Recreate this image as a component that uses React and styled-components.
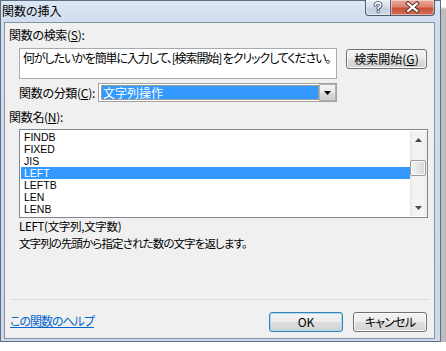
import React from "react";
import styled, { createGlobalStyle } from "styled-components";

const GlobalStyle = createGlobalStyle`
  html, body { margin: 0; padding: 0; background: #ffffff; }
  body {
    font-family: "Noto Sans CJK JP", "Noto Sans", sans-serif;
    font-size: 12px;
    color: #000;
    font-feature-settings: "palt";
  }
  * { box-sizing: border-box; }
`;

const Window = styled.div`
  width: 441px;
  height: 342px;
  border: 1px solid #5f6f83;
  background: linear-gradient(#dce7f4 0px, #d0ddee 22px, #cbd9ea 100%);
  box-shadow: 8px 8px 2px rgba(0, 0, 0, 0.26);
  display: flex;
  flex-direction: column;
`;

const TitleBar = styled.div`
  height: 21px;
  display: flex;
  align-items: flex-start;
  justify-content: space-between;
`;

const Title = styled.div`
  padding-left: 1px;
  line-height: 20px;
  font-size: 12px;
  color: #000;
`;

const CaptionButtons = styled.div`
  display: flex;
  margin-top: -1px;
  margin-right: 5px;
  height: 16px;
`;

const CaptionButton = styled.div`
  width: ${(p) => (p.$close ? 44 : 26)}px;
  height: 16px;
  display: flex;
  align-items: center;
  justify-content: center;
  border: 1px solid #4b5d73;
  border-top: none;
  ${(p) => (p.$close ? "border-left: none;" : "")}
  border-radius: ${(p) => (p.$close ? "0 0 4px 0" : "0 0 0 4px")};
  background: ${(p) =>
    p.$close
      ? "linear-gradient(#e9a99b 0%, #dd8372 45%, #c9503b 55%, #d36f54 100%)"
      : "linear-gradient(#e9eef5 0%, #d6dfea 45%, #c3cfdf 55%, #cdd8e6 100%)"};
  box-shadow: inset 0 0 0 1px rgba(255, 255, 255, 0.45);
`;

const Client = styled.div`
  flex: 1;
  margin: 0 5px 2px 3px;
  border: 1px solid #8593a4;
  background: #f0f0f0;
  padding: 5px 5px 6px 4px;
  display: flex;
  flex-direction: column;
`;

const Label = styled.div`
  height: 14px;
  line-height: 14px;
  white-space: nowrap;
  letter-spacing: -0.3px;
  margin-top: ${(p) => p.$top || 0}px;
  margin-left: ${(p) => p.$indent || 0}px;
`;

const SearchRow = styled.div`
  display: flex;
  align-items: flex-start;
  gap: 9px;
  margin-top: 6px;
  margin-left: 10px;
`;

const SearchBox = styled.div`
  width: 318px;
  height: 31px;
  border: 1px solid #a6abb2;
  background: #fff;
  padding: 2px 3px;
  line-height: 14px;
  letter-spacing: -1.1px;
  white-space: nowrap;
  overflow: hidden;
`;

const Button = styled.div`
  width: ${(p) => p.$w}px;
  height: 20px;
  margin-top: ${(p) => p.$top || 0}px;
  display: flex;
  align-items: center;
  justify-content: center;
  border: 1px solid ${(p) => (p.$default ? "#3c7fb1" : "#707070")};
  border-radius: 3px;
  background: linear-gradient(#f3f3f3 0%, #ececec 50%, #dedede 51%, #d2d2d2 100%);
  box-shadow: inset 0 0 0 1px ${(p) => (p.$default ? "#a8dcf6" : "#fbfbfb")};
  white-space: nowrap;
  line-height: 14px;
  letter-spacing: ${(p) => p.$ls || 0}px;
`;

const CategoryRow = styled.div`
  display: flex;
  align-items: center;
  margin-top: 4px;
  margin-left: 10px;
`;

const CategoryLabel = styled.div`
  width: 79px;
  line-height: 14px;
  letter-spacing: -0.3px;
  white-space: nowrap;
`;

const Combo = styled.div`
  width: 239px;
  height: 19px;
  border: 1px solid #a2a2a2;
  background: #fff;
  display: flex;
`;

const ComboValue = styled.div`
  flex: 1;
  margin: 1px 0 1px 2px;
  background: #3399ff;
  color: #fff;
  border: 1px dotted #f2a33a;
  padding-left: 1px;
  line-height: 13px;
  white-space: nowrap;
`;

const ComboArrow = styled.div`
  width: 17px;
  display: flex;
  align-items: center;
  justify-content: center;
  border: 1px solid #b1b1b1;
  background: linear-gradient(#f4f4f4 0%, #e9e9e9 50%, #d9d9d9 51%, #cfcfcf 100%);
`;

const ListBox = styled.div`
  width: 409px;
  height: 89px;
  margin-top: 5px;
  margin-left: 10px;
  border: 1px solid #828790;
  background: #fff;
  display: flex;
  padding: 1px 0 1px 1px;
`;

const Items = styled.div`
  flex: 1;
  display: flex;
  flex-direction: column;
`;

const Item = styled.div`
  height: 12px;
  line-height: 12px;
  padding-left: 3px;
  font-family: "Liberation Sans", Arial, sans-serif;
  font-size: 10.5px;
  background: ${(p) => (p.$selected ? "#3399ff" : "transparent")};
  color: ${(p) => (p.$selected ? "#fff" : "#000")};
`;

const ScrollBar = styled.div`
  width: 17px;
  display: flex;
  flex-direction: column;
  background: linear-gradient(to right, #e6e6e6 0%, #f3f3f3 20%, #f3f3f3 80%, #ebebeb 100%);
`;

const ScrollArrow = styled.div`
  height: 17px;
  display: flex;
  align-items: center;
  justify-content: center;
`;

const Track = styled.div`
  flex: 1;
`;

const Thumb = styled.div`
  height: 16px;
  margin-top: 12px;
  margin-right: 1px;
  border: 1px solid #9a9a9a;
  border-radius: 2px;
  background: linear-gradient(to right, #f5f5f5 0%, #e6e6e6 50%, #d7d7d7 100%);
  box-shadow: inset 0 0 0 1px #fafafa;
`;

const TextLine = styled.div`
  height: 17px;
  line-height: 17px;
  font-size: 11.5px;
  margin-left: 10px;
  margin-top: ${(p) => p.$top || 0}px;
  letter-spacing: ${(p) => p.$ls || 0}px;
  white-space: nowrap;
`;

const Spacer = styled.div`
  flex: 1;
`;

const Separator = styled.div`
  height: 1px;
  margin-left: 1px;
  background: #d9dde2;
`;

const Footer = styled.div`
  height: 20px;
  margin-top: 12px;
  margin-left: 1px;
  padding-right: 2px;
  display: flex;
  align-items: center;
  gap: 10px;
`;

const LinkWrap = styled.div`
  flex: 1;
  margin-top: -3px;
  line-height: 14px;
`;

const HelpLink = styled.a`
  color: #0066cc;
  text-decoration: underline;
  letter-spacing: -1px;
  cursor: pointer;
`;

const Tri = ({ up, color = "#333" }) => (
  <svg width="7" height="4" viewBox="0 0 7 4">
    <path d={up ? "M0 4 L3.5 0 L7 4 Z" : "M0 0 L7 0 L3.5 4 Z"} fill={color} />
  </svg>
);

const HelpGlyph = () => (
  <svg width="26" height="15" viewBox="0 0 26 15">
    <g fill="none" strokeLinecap="round" strokeLinejoin="round">
      <path d="M10 5 Q10 2.5 13 2.5 Q16 2.5 16 5 Q16 6.8 13.3 7.8 L13.2 9" stroke="#46586e" strokeWidth="3.6" />
      <path d="M13.2 12 L13.2 12.2" stroke="#46586e" strokeWidth="3.6" />
      <path d="M10 5 Q10 2.5 13 2.5 Q16 2.5 16 5 Q16 6.8 13.3 7.8 L13.2 9" stroke="#ffffff" strokeWidth="1.7" />
      <path d="M13.2 12 L13.2 12.2" stroke="#ffffff" strokeWidth="1.9" />
    </g>
  </svg>
);

const CloseGlyph = () => (
  <svg width="44" height="15" viewBox="0 0 44 15">
    <g fill="none" strokeLinecap="square">
      <path d="M17.5 3.5 L26.5 11 M26.5 3.5 L17.5 11" stroke="#5a2a22" strokeWidth="4.2" />
      <path d="M17.5 3.5 L26.5 11 M26.5 3.5 L17.5 11" stroke="#ffffff" strokeWidth="2.2" />
    </g>
  </svg>
);

const functions = ["FINDB", "FIXED", "JIS", "LEFT", "LEFTB", "LEN", "LENB"];

export default function App() {
  return (
    <>
      <GlobalStyle />
      <Window>
        <TitleBar>
          <Title>関数の挿入</Title>
          <CaptionButtons>
            <CaptionButton>
              <HelpGlyph />
            </CaptionButton>
            <CaptionButton $close>
              <CloseGlyph />
            </CaptionButton>
          </CaptionButtons>
        </TitleBar>
        <Client>
          <Label>
            関数の検索(<u>S</u>):
          </Label>
          <SearchRow>
            <SearchBox>何がしたいかを簡単に入力して、[検索開始] をクリックしてください。</SearchBox>
            <Button $w={81} $top={1}>
              検索開始(<u>G</u>)
            </Button>
          </SearchRow>
          <CategoryRow>
            <CategoryLabel>
              関数の分類(<u>C</u>):
            </CategoryLabel>
            <Combo>
              <ComboValue>文字列操作</ComboValue>
              <ComboArrow>
                <Tri color="#000" />
              </ComboArrow>
            </Combo>
          </CategoryRow>
          <Label $top={8}>
            関数名(<u>N</u>):
          </Label>
          <ListBox>
            <Items>
              {functions.map((f) => (
                <Item key={f} $selected={f === "LEFT"}>
                  {f}
                </Item>
              ))}
            </Items>
            <ScrollBar>
              <ScrollArrow>
                <Tri up color="#4a4a4a" />
              </ScrollArrow>
              <Track>
                <Thumb />
              </Track>
              <ScrollArrow>
                <Tri color="#4a4a4a" />
              </ScrollArrow>
            </ScrollBar>
          </ListBox>
          <TextLine $ls={-0.3}>LEFT(文字列,文字数)</TextLine>
          <TextLine $ls={-0.9}>文字列の先頭から指定された数の文字を返します。</TextLine>
          <Spacer />
          <Separator />
          <Footer>
            <LinkWrap>
              <HelpLink>この関数のヘルプ</HelpLink>
            </LinkWrap>
            <Button $w={74} $default>
              OK
            </Button>
            <Button $w={74} $ls={-0.8}>キャンセル</Button>
          </Footer>
        </Client>
      </Window>
    </>
  );
}
